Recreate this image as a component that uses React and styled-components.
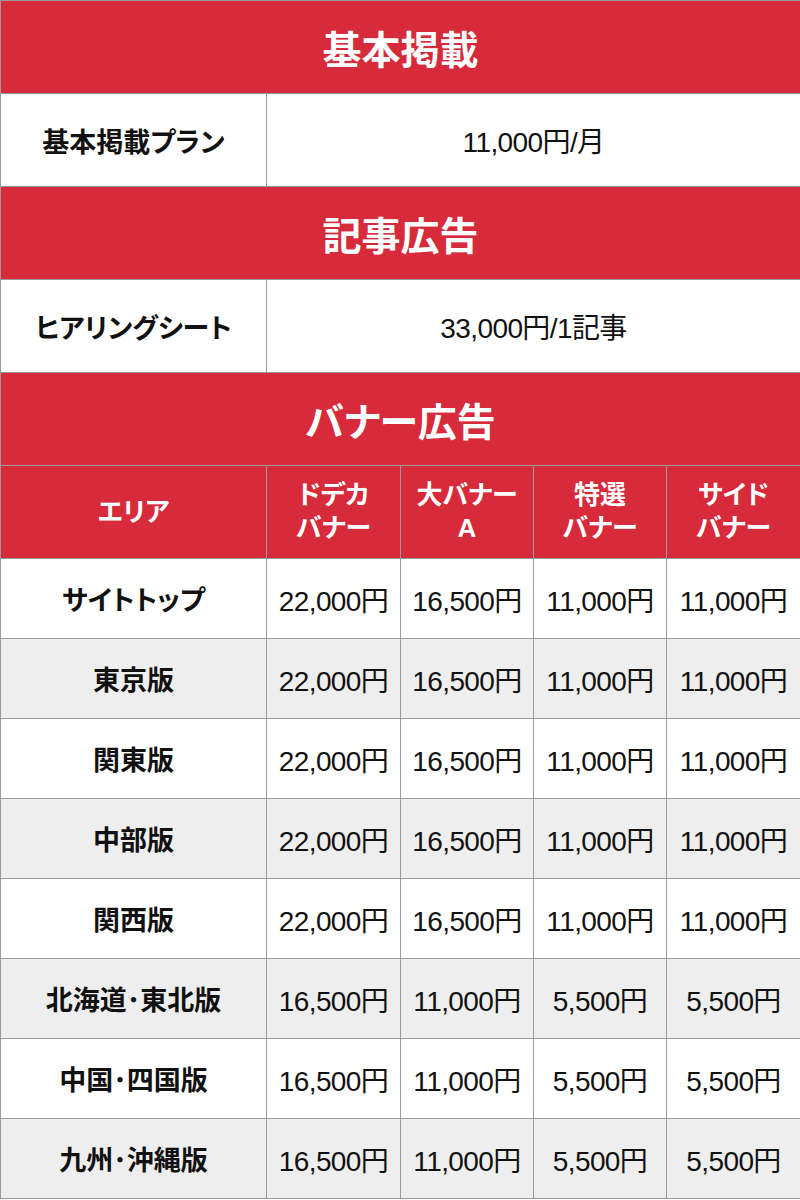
import React from 'react';
import styled, { createGlobalStyle } from 'styled-components';

const GlobalStyle = createGlobalStyle`
  html, body {
    margin: 0;
    padding: 0;
    background: #ffffff;
  }
  body {
    font-family: "Liberation Sans", Arial, "Noto Sans CJK JP", sans-serif;
    color: #111;
  }
`;

const RED = '#d72a3b';
const LINE = '#9a9a9a';

const Table = styled.table`
  width: 800px;
  table-layout: fixed;
  border-collapse: collapse;
`;

const SectionTitle = styled.th`
  height: 92px;
  background: ${RED};
  color: #fff;
  font-size: 39px;
  font-weight: 700;
  font-feature-settings: "palt";
  text-align: center;
  border: 1px solid ${LINE};
  padding: 0;
`;

const Label = styled.td`
  height: ${(p) => (p.$tall ? 92 : 79)}px;
  background: ${(p) => (p.$alt ? '#eeeeee' : '#ffffff')};
  font-size: 27px;
  font-weight: 700;
  font-feature-settings: "palt";
  text-align: center;
  border: 1px solid ${LINE};
  padding: 0;
  white-space: nowrap;
`;

const Value = styled.td`
  background: ${(p) => (p.$alt ? '#eeeeee' : '#ffffff')};
  font-size: 28px;
  text-align: center;
  border: 1px solid ${LINE};
  padding: 0;
  white-space: nowrap;
  letter-spacing: -0.6px;
`;

const HeadCell = styled.th`
  height: 92px;
  background: ${RED};
  color: #fff;
  font-size: 26px;
  font-weight: 700;
  font-feature-settings: "palt";
  line-height: 33px;
  text-align: center;
  border: 1px solid ${LINE};
  padding: 0;
`;

const price = (a, b, c, d) => [a, b, c, d];

const rows = [
  ['サイトトップ', price('22,000円', '16,500円', '11,000円', '11,000円')],
  ['東京版', price('22,000円', '16,500円', '11,000円', '11,000円')],
  ['関東版', price('22,000円', '16,500円', '11,000円', '11,000円')],
  ['中部版', price('22,000円', '16,500円', '11,000円', '11,000円')],
  ['関西版', price('22,000円', '16,500円', '11,000円', '11,000円')],
  ['北海道･東北版', price('16,500円', '11,000円', '5,500円', '5,500円')],
  ['中国･四国版', price('16,500円', '11,000円', '5,500円', '5,500円')],
  ['九州･沖縄版', price('16,500円', '11,000円', '5,500円', '5,500円')],
];

const heads = [
  ['ドデカ', 'バナー'],
  ['大バナー', 'A'],
  ['特選', 'バナー'],
  ['サイド', 'バナー'],
];

export default function App() {
  return (
    <>
      <GlobalStyle />
      <Table>
        <colgroup>
          <col style={{ width: 266 }} />
          <col style={{ width: 134 }} />
          <col style={{ width: 133 }} />
          <col style={{ width: 133 }} />
          <col style={{ width: 134 }} />
        </colgroup>
        <tbody>
          <tr>
            <SectionTitle colSpan={5}>基本掲載</SectionTitle>
          </tr>
          <tr>
            <Label $tall>基本掲載プラン</Label>
            <Value colSpan={4}>11,000円/月</Value>
          </tr>
          <tr>
            <SectionTitle colSpan={5}>記事広告</SectionTitle>
          </tr>
          <tr>
            <Label $tall>ヒアリングシート</Label>
            <Value colSpan={4}>33,000円/1記事</Value>
          </tr>
          <tr>
            <SectionTitle colSpan={5}>バナー広告</SectionTitle>
          </tr>
          <tr>
            <HeadCell>エリア</HeadCell>
            {heads.map(([a, b]) => (
              <HeadCell key={a}>
                {a}
                <br />
                {b}
              </HeadCell>
            ))}
          </tr>
          {rows.map(([area, values], i) => (
            <tr key={area}>
              <Label $alt={i % 2 === 1}>{area}</Label>
              {values.map((v, j) => (
                <Value key={j} $alt={i % 2 === 1}>
                  {v}
                </Value>
              ))}
            </tr>
          ))}
        </tbody>
      </Table>
    </>
  );
}
